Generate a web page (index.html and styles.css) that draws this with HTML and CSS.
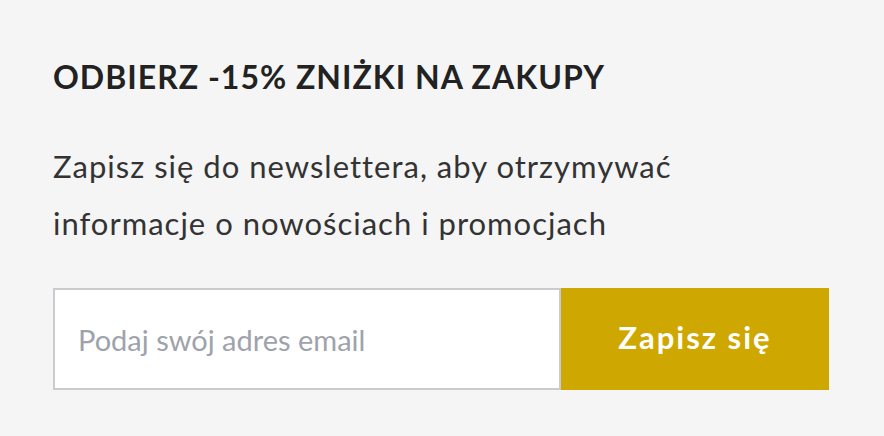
FILE: index.html
```html
<!DOCTYPE html>
<html lang="pl">
<head>
<meta charset="utf-8">
<link rel="stylesheet" href="styles.css">
</head>
<body>
<section class="newsletter">
  <h2 class="title">ODBIERZ -15% ZNIŻKI NA ZAKUPY</h2>
  <p class="lead">Zapisz się do newslettera, aby otrzymywać<br>informacje o nowościach i promocjach</p>
  <form class="form">
    <input class="email" type="email" placeholder="Podaj swój adres email">
    <button class="submit" type="button">Zapisz się</button>
  </form>
</section>
</body>
</html>
```
FILE: styles.css
```css
html, body {
  margin: 0;
  padding: 0;
  background: #f5f5f5;
}
body {
  padding: 57px 0 0 53px;
  font-family: Lato, "Open Sans", sans-serif;
}
.newsletter {
  width: 776px;
  display: flex;
  flex-direction: column;
}
.title {
  margin: 0;
  font-size: 32px;
  line-height: 40px;
  font-weight: 700;
  letter-spacing: 1px;
  color: #222;
}
.lead {
  margin: 41px 0 0;
  font-size: 31px;
  line-height: 57px;
  letter-spacing: 1px;
  color: #333;
}
.form {
  margin: 36px 0 0;
  display: flex;
  height: 102px;
}
.email {
  box-sizing: border-box;
  width: 508px;
  height: 102px;
  margin: 0;
  padding: 0 0 0 23px;
  border: 2px solid #c9cbcf;
  background: #fff;
  font-family: Lato, sans-serif;
  font-size: 29px;
  color: #333;
  outline: none;
}
.email::placeholder {
  color: #9ea3ab;
}
.submit {
  flex: 1;
  margin: 0;
  padding: 0 0 4px;
  border: 0;
  background: #cea700;
  color: #fff;
  font-family: Lato, sans-serif;
  font-size: 31px;
  font-weight: 700;
  letter-spacing: 2px;
  cursor: pointer;
}
```
